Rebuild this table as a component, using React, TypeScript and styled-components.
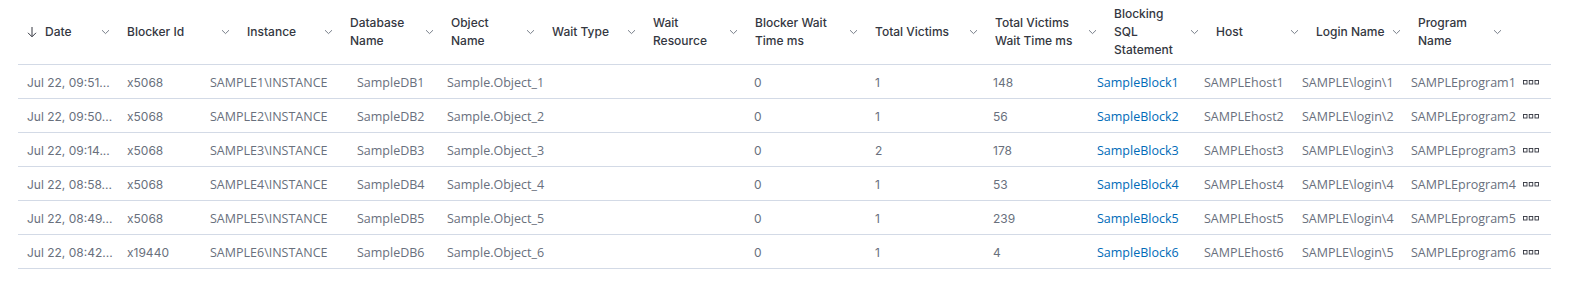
import React from 'react'
import styled, { createGlobalStyle } from 'styled-components'

const GlobalStyle = createGlobalStyle`
  html, body {
    margin: 0;
    padding: 0;
    background: #ffffff;
  }
`

const headCols = '100px 120px 103px 101px 101px 101px 102px 120px 120px 119px 102px 100px 102px 101px 41px'
const bodyCols = '100px 83px 147px 90px 105px 101px 101px 121px 118px 104px 107px 98px 109px 112px 37px'

const Page = styled.div`
  padding: 0 30px 0 18px;
  font-family: Inter, 'Liberation Sans', sans-serif;
`

const Table = styled.div`
  width: 1533px;
`

const HeaderRow = styled.div`
  display: grid;
  grid-template-columns: ${headCols};
  height: 65px;
  border-bottom: 1px solid #d3dae6;
  box-sizing: border-box;
`

const HeaderCell = styled.div`
  display: flex;
  align-items: center;
  justify-content: space-between;
  padding: 0 8px 0 9px;
  font-size: 12px;
  font-weight: 500;
  line-height: 18px;
  color: #343741;
`

const HeaderLabel = styled.div`
  display: flex;
  align-items: center;
  gap: 8px;
  white-space: nowrap;
`

const Lines = styled.div`
  display: flex;
  flex-direction: column;
`

const Row = styled.div`
  display: grid;
  grid-template-columns: ${bodyCols};
  height: 34px;
  border-bottom: 1px solid #d3dae6;
  box-sizing: border-box;
`

const Cell = styled.div<{ $kind?: 'num' | 'text' | 'link' }>`
  display: flex;
  align-items: center;
  padding: 2px 0 0 9px;
  white-space: nowrap;
  font-size: ${(p) => (p.$kind === 'num' ? '12px' : '12.5px')};
  font-family: ${(p) =>
    p.$kind === 'num' ? "Inter, 'Liberation Sans', sans-serif" : "'Open Sans', 'Liberation Sans', sans-serif"};
  color: ${(p) => (p.$kind === 'link' ? '#006bb8' : '#69707d')};
  font-weight: ${(p) => (p.$kind === 'link' ? 500 : 400)};
`

const ActionCell = styled.div`
  display: flex;
  align-items: center;
  padding: 2px 0 0 9px;
`

const Chevron = () => (
  <svg width="9" height="6" viewBox="0 0 9 6" fill="none">
    <path d="M1 1.2 4.5 4.6 8 1.2" stroke="#69707d" strokeWidth="0.9" />
  </svg>
)

const SortDown = () => (
  <svg width="10" height="12" viewBox="0 0 10 12" fill="none">
    <path d="M5 1v9.5M1 6.8l4 4 4-4" stroke="#343741" strokeWidth="1" />
  </svg>
)

const Boxes = () => (
  <svg width="16" height="6" viewBox="0 0 16 6" fill="none">
    <rect x="0.5" y="0.5" width="3.5" height="3.5" stroke="#343741" strokeWidth="0.9" />
    <rect x="6.25" y="0.5" width="3.5" height="3.5" stroke="#343741" strokeWidth="0.9" />
    <rect x="12" y="0.5" width="3.5" height="3.5" stroke="#343741" strokeWidth="0.9" />
  </svg>
)

const headers: string[][] = [
  ['Date'],
  ['Blocker Id'],
  ['Instance'],
  ['Database', 'Name'],
  ['Object', 'Name'],
  ['Wait Type'],
  ['Wait', 'Resource'],
  ['Blocker Wait', 'Time ms'],
  ['Total Victims'],
  ['Total Victims', 'Wait Time ms'],
  ['Blocking', 'SQL', 'Statement'],
  ['Host'],
  ['Login Name'],
  ['Program', 'Name'],
]

type Rec = {
  date: string
  blocker: string
  n: number
  wait: number
  victims: number
  victimsWait: number
  login: number
}

const rows: Rec[] = [
  { date: 'Jul 22, 09:51...', blocker: 'x5068', n: 1, wait: 0, victims: 1, victimsWait: 148, login: 1 },
  { date: 'Jul 22, 09:50...', blocker: 'x5068', n: 2, wait: 0, victims: 1, victimsWait: 56, login: 2 },
  { date: 'Jul 22, 09:14...', blocker: 'x5068', n: 3, wait: 0, victims: 2, victimsWait: 178, login: 3 },
  { date: 'Jul 22, 08:58...', blocker: 'x5068', n: 4, wait: 0, victims: 1, victimsWait: 53, login: 4 },
  { date: 'Jul 22, 08:49...', blocker: 'x5068', n: 5, wait: 0, victims: 1, victimsWait: 239, login: 4 },
  { date: 'Jul 22, 08:42...', blocker: 'x19440', n: 6, wait: 0, victims: 1, victimsWait: 4, login: 5 },
]

const App: React.FC = () => {
  return (
    <Page>
      <GlobalStyle />
      <Table>
        <HeaderRow>
          {headers.map((lines, i) => (
            <HeaderCell key={i}>
              <HeaderLabel>
                {i === 0 && <SortDown />}
                <Lines>
                  {lines.map((l) => (
                    <span key={l}>{l}</span>
                  ))}
                </Lines>
              </HeaderLabel>
              <Chevron />
            </HeaderCell>
          ))}
          <div />
        </HeaderRow>
        {rows.map((r) => (
          <Row key={r.n}>
            <Cell $kind="num">{r.date}</Cell>
            <Cell $kind="num">{r.blocker}</Cell>
            <Cell>{`SAMPLE${r.n}\\INSTANCE`}</Cell>
            <Cell>{`SampleDB${r.n}`}</Cell>
            <Cell>{`Sample.Object_${r.n}`}</Cell>
            <Cell />
            <Cell />
            <Cell $kind="num">{r.wait}</Cell>
            <Cell $kind="num">{r.victims}</Cell>
            <Cell $kind="num">{r.victimsWait}</Cell>
            <Cell $kind="link">{`SampleBlock${r.n}`}</Cell>
            <Cell>{`SAMPLEhost${r.n}`}</Cell>
            <Cell>{`SAMPLE\\login\\${r.login}`}</Cell>
            <Cell>{`SAMPLEprogram${r.n}`}</Cell>
            <ActionCell>
              <Boxes />
            </ActionCell>
          </Row>
        ))}
      </Table>
    </Page>
  )
}

export default App
